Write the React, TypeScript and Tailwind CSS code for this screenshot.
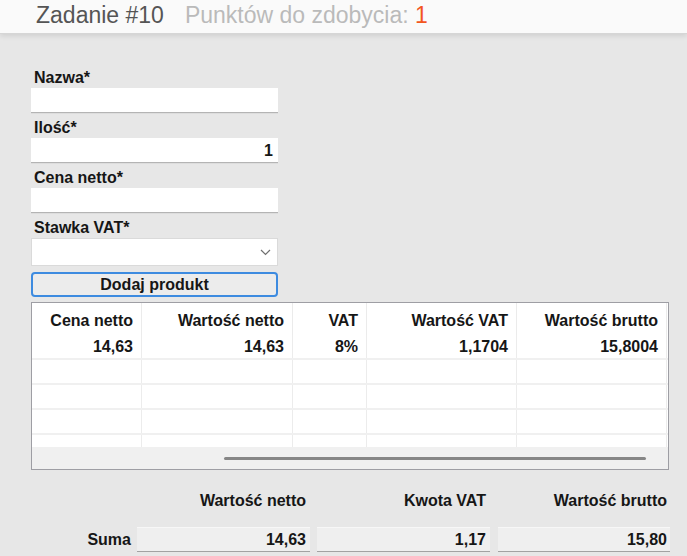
const COLS = ["Cena netto", "Wartość netto", "VAT", "Wartość VAT", "Wartość brutto"];
const ROW = ["14,63", "14,63", "8%", "1,1704", "15,8004"];

function Field({ label, value }: { label: string; value?: string }) {
  return (
    <div className="mt-[5px] first:mt-0">
      <div className="h-[20px] pl-[3px] text-[16px] leading-[20px] font-bold text-[#161616]">{label}</div>
      <div className="h-[25px] w-[247px] bg-white border-b border-[#b4b4b4] shadow-[0_1px_0_rgba(0,0,0,0.04)] text-right pr-[5px] text-[16px] font-bold leading-[25px] text-[#161616]">
        {value}
      </div>
    </div>
  );
}

export default function App() {
  return (
    <div className="min-h-screen bg-[#e7e7e7] font-['Liberation_Sans',Arial,sans-serif]">
      <div className="h-[34px] bg-[#fafafa] border-b border-[#d6d6d6] shadow-[0_2px_5px_rgba(0,0,0,0.10)] pl-[36px] text-[23px] leading-[30px] flex">
        <span className="text-[#555]">Zadanie #10</span>
        <span className="ml-[21px] text-[#bababa]">
          Punktów do zdobycia: <span className="text-[#f2561d]">1</span>
        </span>
      </div>

      <div className="pl-[31px] pt-[34px]">
        <Field label="Nazwa*" />
        <Field label="Ilość*" value="1" />
        <Field label="Cena netto*" />
        <div className="mt-[5px]">
          <div className="h-[20px] pl-[3px] text-[16px] leading-[20px] font-bold text-[#161616]">Stawka VAT*</div>
          <div className="h-[28px] w-[247px] bg-white border border-[#dadada] flex items-center justify-end pr-[6px]">
            <svg width="11" height="7" viewBox="0 0 11 7">
              <polyline points="1,1 5.5,5.5 10,1" fill="none" stroke="#707070" strokeWidth="1.2" />
            </svg>
          </div>
        </div>
        <button className="mt-[6px] h-[25px] w-[247px] rounded-[4px] border-2 border-[#3d8be0] bg-[#ececec] text-[16px] font-bold leading-[20px] text-[#161616] block">
          Dodaj produkt
        </button>

        <div className="mt-[5px] w-[638px] border border-[#9e9ea4] bg-white">
          <div className="grid grid-cols-[110px_151px_74px_150px_150px] h-[32px]">
            {COLS.map((c) => (
              <div key={c} className="border-r border-[#ebebeb] text-right pr-[8px] pt-[8px] text-[16px] leading-[20px] font-bold text-[#161616] whitespace-nowrap">
                {c}
              </div>
            ))}
          </div>
          {[0, 1, 2, 3].map((r) => (
            <div key={r} className="grid grid-cols-[110px_151px_74px_150px_150px] h-[25px] border-b-2 border-[#f0f0f0]">
              {COLS.map((c, i) => (
                <div key={c} className="border-r border-[#ececec] text-right pr-[8px] text-[16px] leading-[23px] font-bold text-[#161616]">
                  {r === 0 ? ROW[i] : ""}
                </div>
              ))}
            </div>
          ))}
          <div className="grid grid-cols-[110px_151px_74px_150px_150px] h-[12px]">
            {COLS.map((c) => (
              <div key={c} className="border-r border-[#ececec]" />
            ))}
          </div>
          <div className="h-[22px] bg-[#f0f0f0] flex items-center">
            <div className="ml-[192px] w-[422px] h-[3px] rounded-full bg-[#868686]" />
          </div>
        </div>
      </div>

      <div className="mt-[21px] flex text-[16px] font-bold text-[#161616]">
        <div className="w-[137px]" />
        <div className="w-[173px] text-right pr-[4px] leading-[20px]">Wartość netto</div>
        <div className="ml-[7px] w-[173px] text-right pr-[4px] leading-[20px]">Kwota VAT</div>
        <div className="ml-[8px] w-[172px] text-right pr-[3px] leading-[20px]">Wartość brutto</div>
      </div>
      <div className="mt-[16px] flex items-center text-[16px] font-bold text-[#161616]">
        <div className="w-[131px] text-right leading-[20px]">Suma</div>
        <div className="ml-[6px] w-[173px] h-[25px] bg-[#efefef] border-t border-[#f7f7f7] border-b border-b-[#a2a2a2] text-right pr-[4px] leading-[24px]">14,63</div>
        <div className="ml-[7px] w-[173px] h-[25px] bg-[#efefef] border-t border-[#f7f7f7] border-b border-b-[#a2a2a2] text-right pr-[4px] leading-[24px]">1,17</div>
        <div className="ml-[8px] w-[172px] h-[25px] bg-[#efefef] border-t border-[#f7f7f7] border-b border-b-[#a2a2a2] text-right pr-[3px] leading-[24px]">15,80</div>
      </div>
    </div>
  );
}
